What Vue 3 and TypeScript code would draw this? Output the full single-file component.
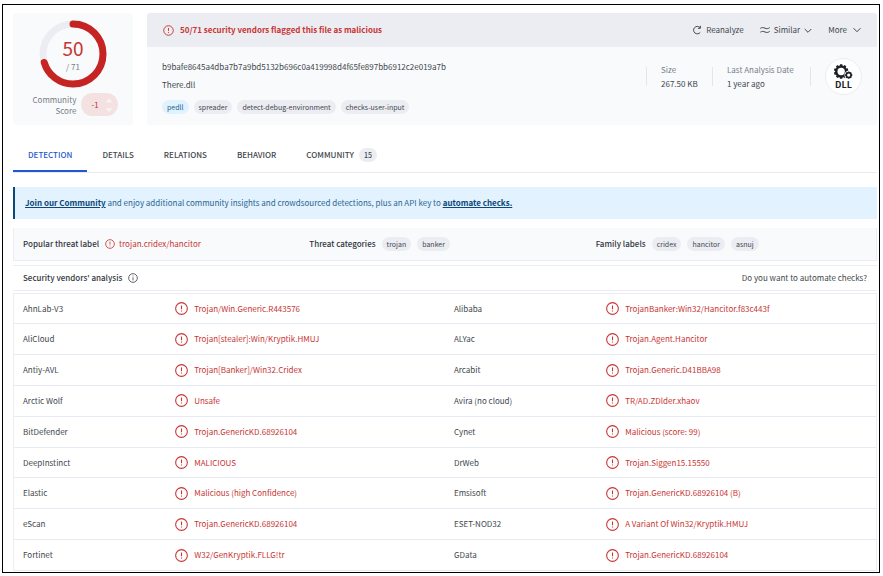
<script setup lang="ts">
interface Verdict {
  vendor: string
  result: string
}

const flagged = 50
const total = 71

const tags = [
  { name: 'pedll', accent: true },
  { name: 'spreader', accent: false },
  { name: 'detect-debug-environment', accent: false },
  { name: 'checks-user-input', accent: false },
]

const tabs = [
  { name: 'DETECTION', count: null },
  { name: 'DETAILS', count: null },
  { name: 'RELATIONS', count: null },
  { name: 'BEHAVIOR', count: null },
  { name: 'COMMUNITY', count: 15 },
]

const rows: [Verdict, Verdict][] = [
  [{ vendor: 'AhnLab-V3', result: 'Trojan/Win.Generic.R443576' }, { vendor: 'Alibaba', result: 'TrojanBanker:Win32/Hancitor.f83c443f' }],
  [{ vendor: 'AliCloud', result: 'Trojan[stealer]:Win/Kryptik.HMUJ' }, { vendor: 'ALYac', result: 'Trojan.Agent.Hancitor' }],
  [{ vendor: 'Antiy-AVL', result: 'Trojan[Banker]/Win32.Cridex' }, { vendor: 'Arcabit', result: 'Trojan.Generic.D41BBA98' }],
  [{ vendor: 'Arctic Wolf', result: 'Unsafe' }, { vendor: 'Avira (no cloud)', result: 'TR/AD.ZDlder.xhaov' }],
  [{ vendor: 'BitDefender', result: 'Trojan.GenericKD.68926104' }, { vendor: 'Cynet', result: 'Malicious (score: 99)' }],
  [{ vendor: 'DeepInstinct', result: 'MALICIOUS' }, { vendor: 'DrWeb', result: 'Trojan.Siggen15.15550' }],
  [{ vendor: 'Elastic', result: 'Malicious (high Confidence)' }, { vendor: 'Emsisoft', result: 'Trojan.GenericKD.68926104 (B)' }],
  [{ vendor: 'eScan', result: 'Trojan.GenericKD.68926104' }, { vendor: 'ESET-NOD32', result: 'A Variant Of Win32/Kryptik.HMUJ' }],
  [{ vendor: 'Fortinet', result: 'W32/GenKryptik.FLLG!tr' }, { vendor: 'GData', result: 'Trojan.GenericKD.68926104' }],
]

// Gear outline: alternating tooth and valley points around a centre.
function gear(cx: number, cy: number, outer: number, inner: number, teeth: number): string {
  const points: string[] = []
  const step = (Math.PI * 2) / teeth
  for (let i = 0; i < teeth; i++) {
    const a = i * step
    for (const [offset, r] of [[-0.36, inner], [-0.25, outer], [0.25, outer], [0.36, inner]]) {
      const t = a + offset * step
      points.push(`${(cx + r * Math.sin(t)).toFixed(2)},${(cy - r * Math.cos(t)).toFixed(2)}`)
    }
  }
  return points.join(' ')
}
</script>

<template>
  <div class="frame">
    <header class="summary">
      <section class="card score">
        <div class="gauge">
          <svg viewBox="0 0 68 68" aria-hidden="true">
            <circle class="track" cx="34" cy="34" r="30" />
            <circle class="arc" cx="34" cy="34" r="30" pathLength="71" :stroke-dasharray="`${flagged} ${total}`" transform="rotate(-90 34 34)" />
          </svg>
          <div class="gauge-text">
            <span class="flagged">{{ flagged }}</span>
            <span class="total">/ {{ total }}</span>
          </div>
        </div>
        <div class="community">
          <span class="community-label">Community Score</span>
          <span class="votes">
            -1
            <svg viewBox="0 0 8 16" aria-hidden="true">
              <path d="M4 1.5 7.4 5.2H.6ZM4 15 7.4 11.3H.6Z" />
            </svg>
          </span>
        </div>
      </section>

      <section class="card file">
        <div class="alert">
          <svg class="icon-small" viewBox="0 0 12 12" aria-hidden="true">
            <circle cx="6" cy="6" r="5.2" /><path d="M6 3.2v3.4M6 7.8v1" />
          </svg>
          <strong>50/71 security vendors flagged this file as malicious</strong>
          <nav class="actions">
            <button type="button">
              <svg class="action-icon" viewBox="0 0 10 10" aria-hidden="true"><path d="M8 2.6A3.7 3.7 0 1 0 8.2 7.4M8.4.8v2.5H5.9" /></svg>
              Reanalyze
            </button>
            <button type="button">
              <svg class="action-icon" viewBox="0 0 10 10" aria-hidden="true"><path d="M.3 3.4C2 2.2 3.4 2.5 5 3.2S8 3.9 9.7 2.6M.3 7.2C2 6 3.4 6.3 5 7S8 7.7 9.7 6.4" /></svg>
              Similar
              <svg class="chevron" viewBox="0 0 8 8" aria-hidden="true"><path d="m.7 3 3.3 3.3L7.3 3" /></svg>
            </button>
            <button type="button" class="more">
              More
              <svg class="chevron" viewBox="0 0 8 8" aria-hidden="true"><path d="m.5 2.2 3.5 3.5 3.5-3.5" /></svg>
            </button>
          </nav>
        </div>
        <div class="details">
          <div class="identity">
            <div class="hash">b9bafe8645a4dba7b7a9bd5132b696c0a419998d4f65fe897bb6912c2e019a7b</div>
            <div class="name">There.dll</div>
            <div class="tags">
              <a v-for="tag in tags" :key="tag.name" href="#" class="chip" :class="{ accent: tag.accent }">{{ tag.name }}</a>
            </div>
          </div>
          <dl class="facts">
            <div class="fact size"><dt>Size</dt><dd>267.50 KB</dd></div>
            <div class="fact date"><dt>Last Analysis Date</dt><dd>1 year ago</dd></div>
          </dl>
          <div class="filetype">
            <svg viewBox="0 0 20 17" aria-hidden="true">
              <polygon :points="gear(7.5, 8, 7.8, 6.5, 10)" />
              <circle class="hole" cx="7.5" cy="8" r="3.9" />
              <circle class="hole" cx="15.5" cy="11.8" r="4.5" />
              <polygon :points="gear(15.5, 11.8, 4, 3.4, 8)" />
              <circle class="hole" cx="15.5" cy="11.8" r="1.7" />
            </svg>
            <b>DLL</b>
          </div>
        </div>
      </section>
    </header>

    <nav class="tabs">
      <a v-for="(tab, i) in tabs" :key="tab.name" href="#" class="tab" :class="{ active: i === 0 }">
        {{ tab.name }}<span v-if="tab.count" class="chip count">{{ tab.count }}</span>
      </a>
    </nav>

    <p class="banner">
      <a href="#">Join our Community</a> and enjoy additional community insights and crowdsourced detections, plus an API key to <a href="#">automate checks.</a>
    </p>

    <section class="threat">
      <div class="threat-cell">
        <h2>Popular threat label</h2>
        <span class="label-value">
          <svg class="icon-tiny" viewBox="0 0 12 12" aria-hidden="true">
            <circle cx="6" cy="6" r="5.2" /><path d="M6 3.2v3.4M6 7.8v1" />
          </svg>
          trojan.cridex/hancitor
        </span>
      </div>
      <div class="threat-cell">
        <h2>Threat categories</h2>
        <span class="chip">trojan</span><span class="chip">banker</span>
      </div>
      <div class="threat-cell">
        <h2>Family labels</h2>
        <span class="chip">cridex</span><span class="chip">hancitor</span><span class="chip">asnuj</span>
      </div>
    </section>

    <div class="analysis-head">
      <h2 id="analysis-title">Security vendors' analysis</h2>
      <svg class="info" viewBox="0 0 12 12" aria-hidden="true">
        <circle cx="6" cy="6" r="5.2" /><path d="M6 5.2v3.7M6 3v1.1" />
      </svg>
      <a href="#">Do you want to automate checks?</a>
    </div>

    <div class="verdicts">
      <table aria-labelledby="analysis-title">
        <colgroup>
          <col class="vendor-col" /><col class="result-col" /><col class="vendor-col" /><col class="result-col" />
        </colgroup>
        <tbody>
          <tr v-for="(pair, i) in rows" :key="i">
            <template v-for="item in pair" :key="item.vendor">
              <th scope="row">{{ item.vendor }}</th>
              <td>
                <span class="result">
                  <svg class="icon-alert" viewBox="0 0 12 12" aria-hidden="true">
                    <circle cx="6" cy="6" r="5.4" /><path d="M6 3.2v3.4M6 7.8v1" />
                  </svg>
                  {{ item.result }}
                </span>
              </td>
            </template>
          </tr>
        </tbody>
      </table>
    </div>
  </div>
</template>

<style>
body {
  background: #fff;
}
</style>

<style scoped>
.frame {
  box-sizing: border-box;
  display: flex;
  flex-direction: column;
  min-height: calc(100vh - 7px);
  margin: 4px 3px 3px 2px;
  padding: 8px 2px 1px 10px;
  border: 1px solid #000;
  color: #41474d;
  font: 8px/12px "Noto Sans CJK SC", "Noto Sans", sans-serif;
}

svg {
  flex: none;
  fill: none;
  stroke: currentColor;
}

h2,
p,
dl,
dd {
  margin: 0;
  font-size: 8px;
}

h2 {
  color: #30363c;
  font-weight: 500;
}

a {
  color: inherit;
  text-decoration: none;
}

.summary {
  display: flex;
  gap: 14px;
}

.card {
  border-radius: 3px;
  background: #f9fafc;
}

.score {
  box-sizing: border-box;
  display: flex;
  flex: none;
  flex-direction: column;
  align-items: center;
  width: 120px;
  padding-top: 7px;
}

.gauge {
  display: grid;
  place-items: center;
}

.gauge > * {
  grid-area: 1 / 1;
}

.gauge svg {
  width: 68px;
  height: 68px;
  stroke-width: 7;
}

.track {
  stroke: #ecedf2;
}

.arc {
  stroke: #c62422;
  stroke-linecap: round;
}

.gauge-text {
  display: flex;
  flex-direction: column;
  align-items: center;
}

.flagged {
  color: #c73532;
  font-size: 19px;
  line-height: 26px;
}

.total {
  color: #777e86;
}

.community {
  display: flex;
  align-items: center;
  gap: 5px;
  padding: 5px 0 8px;
}

.community-label {
  width: 48px;
  color: #777e86;
  line-height: 11px;
  text-align: right;
}

.votes {
  display: flex;
  align-items: center;
  gap: 6px;
  height: 23px;
  padding: 0 5px 0 10px;
  border-radius: 12px;
  background: #f4e2e2;
  color: #c73532;
}

.votes svg {
  width: 8px;
  height: 16px;
  fill: #fbf2f2;
  stroke: none;
}

.file {
  flex: 1;
  overflow: hidden;
}

.alert {
  display: flex;
  align-items: center;
  height: 34px;
  padding: 0 16px;
  background: #ecedf2;
  color: #c73532;
}

.alert strong {
  margin-left: 6px;
}

.icon-small {
  width: 11px;
  height: 11px;
}

.actions {
  display: flex;
  gap: 16px;
  margin-left: auto;
  color: #41474d;
}

.actions button {
  display: flex;
  align-items: center;
  gap: 4px;
  padding: 0;
  border: 0;
  background: none;
  color: inherit;
  font: inherit;
}

.actions .more {
  gap: 6px;
}

.action-icon {
  width: 10px;
  height: 10px;
}

.chevron {
  width: 8px;
  height: 8px;
}

.details {
  display: flex;
  padding: 14px 15px 11px;
}

.identity {
  flex: 1;
}

.name {
  margin-top: 6px;
}

.tags {
  display: flex;
  gap: 5px;
  margin-top: 9px;
}

.chip {
  padding: 0 5px;
  border-radius: 7px;
  background: #ecedf2;
  font-size: 7px;
  line-height: 14px;
}

.chip.accent {
  background: #e1f2ff;
  color: #1c5f8c;
}

.facts {
  display: flex;
  height: 19px;
  margin-top: 6px;
}

.fact {
  box-sizing: border-box;
  padding-left: 14px;
  border-left: 1px solid #e4e6ec;
  line-height: 14px;
}

.fact dt {
  margin-top: -4px;
  color: #777e86;
}

.size {
  width: 66px;
}

.date {
  width: 99px;
  border-right: 1px solid #e4e6ec;
}

.filetype {
  box-sizing: border-box;
  display: flex;
  flex-direction: column;
  align-items: center;
  width: 37px;
  height: 37px;
  margin: -3px 0 0 14px;
  padding-top: 5px;
  border: 1px solid #ecedf2;
  border-radius: 50%;
  background: #fff;
  color: #1c2128;
}

.filetype svg {
  width: 19px;
  height: 16px;
  fill: currentColor;
  stroke: none;
}

.filetype .hole {
  fill: #fff;
}

.filetype b {
  font-size: 9px;
  line-height: 10px;
}

.tabs {
  display: flex;
  height: 32px;
  margin-top: 15px;
  border-bottom: 1px solid #e8eaf1;
}

.tab {
  display: flex;
  align-items: center;
  height: 30px;
  padding: 0 15px;
  border-bottom: 2px solid transparent;
  font-weight: 500;
}

.tab.active {
  border-color: #1f59d0;
  color: #1f59d0;
}

.count {
  margin-left: 5px;
}

.banner {
  margin-top: 14px;
  padding: 10px;
  border-left: 2px solid #0b4779;
  background: #e2f2fe;
  color: #2a6591;
}

.banner a {
  color: #0b4779;
  font-weight: 700;
  text-decoration: underline;
}

.threat {
  display: grid;
  grid-template-columns: repeat(3, 1fr);
  margin-top: 9px;
  padding-left: 3px;
  border: 1px solid #ecedf4;
  border-top: 0;
  background: #f9fafc;
}

.threat-cell {
  display: flex;
  align-items: center;
  gap: 6px;
  height: 32px;
  padding-left: 6px;
}

.label-value {
  display: flex;
  align-items: center;
  gap: 4px;
  color: #c73532;
}

.icon-tiny {
  width: 10px;
  height: 10px;
}

.analysis-head {
  display: flex;
  align-items: center;
  height: 24px;
  margin-top: 4px;
  padding: 0 10px;
  border: solid #ecedf4;
  border-width: 1px 0;
}

.info {
  width: 10px;
  height: 10px;
  margin-left: 6px;
}

.analysis-head a {
  margin-left: auto;
}

.verdicts {
  display: flex;
  flex: 1;
  margin-top: 2px;
  border: 1px solid #ecedf4;
  border-bottom: 0;
}

table {
  width: 100%;
  border-collapse: collapse;
  table-layout: fixed;
}

.vendor-col {
  width: 18.7%;
}

.result-col {
  width: 31.3%;
}

th,
td {
  padding: 0;
  border-bottom: 1px solid #e8eaf3;
  font-weight: 400;
  text-align: left;
}

th {
  padding-left: 9px;
}

.result {
  display: flex;
  align-items: center;
  gap: 6px;
  color: #c73532;
}

.icon-alert {
  width: 13px;
  height: 13px;
}
</style>
